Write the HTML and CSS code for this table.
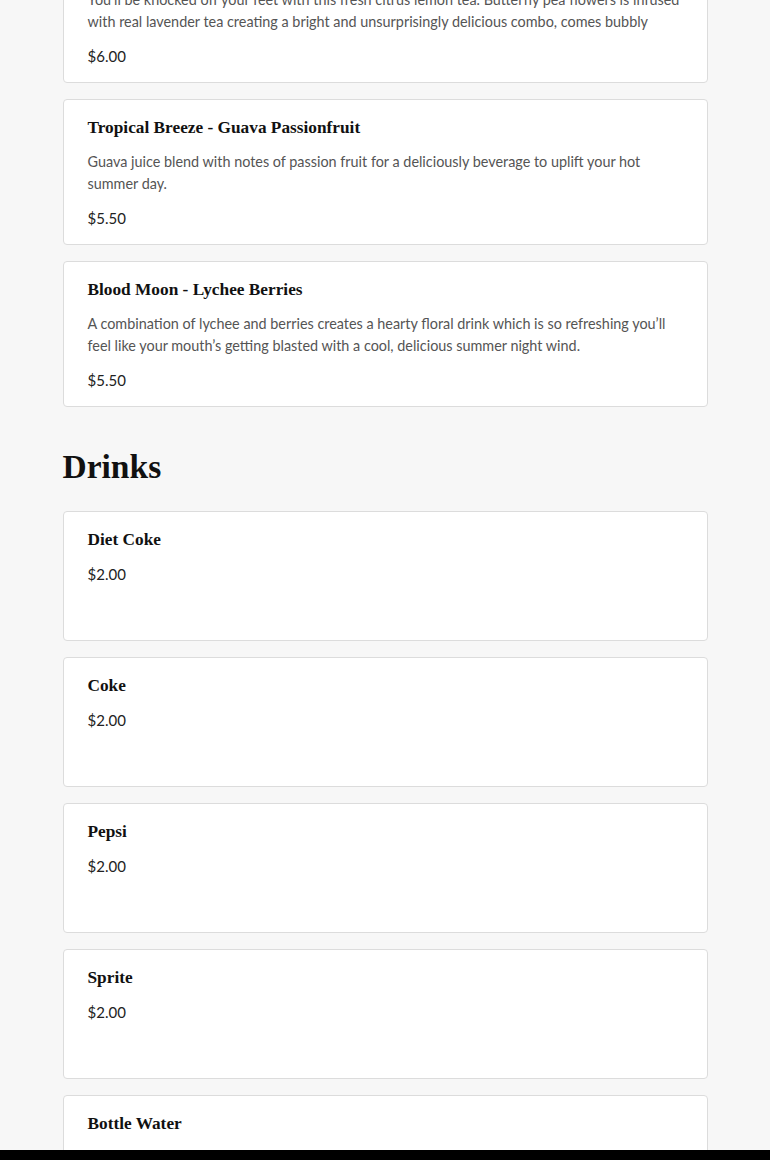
FILE: index.html
```html
<!DOCTYPE html>
<html lang="en">
<head>
<meta charset="utf-8">
<title>Menu</title>
<link rel="stylesheet" href="styles.css">
</head>
<body>
<main class="menu">
  <section class="category category-first">
    <div class="items">
      <article class="item">
        <h3 class="item-name">Butterfly Effect - Lavender Lemon</h3>
        <p class="item-desc">You'll be knocked off your feet with this fresh citrus lemon tea. Butterfly pea flowers is infused with real lavender tea creating a bright and unsurprisingly delicious combo, comes bubbly</p>
        <p class="item-price">$6.00</p>
      </article>
      <article class="item">
        <h3 class="item-name">Tropical Breeze - Guava Passionfruit</h3>
        <p class="item-desc">Guava juice blend with notes of passion fruit for a deliciously beverage to uplift your hot summer day.</p>
        <p class="item-price">$5.50</p>
      </article>
      <article class="item">
        <h3 class="item-name">Blood Moon - Lychee Berries</h3>
        <p class="item-desc">A combination of lychee and berries creates a hearty floral drink which is so refreshing you’ll feel like your mouth’s getting blasted with a cool, delicious summer night wind.</p>
        <p class="item-price">$5.50</p>
      </article>
    </div>
  </section>
  <section class="category">
    <h2 class="category-title">Drinks</h2>
    <div class="items">
      <article class="item item-short">
        <h3 class="item-name">Diet Coke</h3>
        <p class="item-price">$2.00</p>
      </article>
      <article class="item item-short">
        <h3 class="item-name">Coke</h3>
        <p class="item-price">$2.00</p>
      </article>
      <article class="item item-short">
        <h3 class="item-name">Pepsi</h3>
        <p class="item-price">$2.00</p>
      </article>
      <article class="item item-short">
        <h3 class="item-name">Sprite</h3>
        <p class="item-price">$2.00</p>
      </article>
      <article class="item item-short">
        <h3 class="item-name">Bottle Water</h3>
        <p class="item-price">$1.50</p>
      </article>
    </div>
  </section>
</main>
<div class="bottom-bar"></div>
</body>
</html>
```
FILE: styles.css
```css
* { box-sizing: border-box; }
html, body { margin: 0; padding: 0; }
body {
  background: #f7f7f7;
  font-family: Lato, "Liberation Sans", sans-serif;
  color: #222;
}
.menu {
  width: 645px;
  margin: 0 auto;
  padding-bottom: 40px;
  display: flex;
  flex-direction: column;
  gap: 40px;
}
.category-first { margin-top: -63px; }
.items {
  display: flex;
  flex-direction: column;
  gap: 16px;
}
.category-title {
  margin: 0 0 24px;
  font-family: "Liberation Serif", serif;
  font-weight: 700;
  font-size: 33.5px;
  line-height: 40px;
  color: #111;
}
.item {
  background: #fff;
  border: 1px solid #dcdcdc;
  border-radius: 4px;
  padding: 16px 24px 15px;
}
.item-short { min-height: 130px; }
.item-name {
  margin: 0 0 11px;
  font-family: "Liberation Serif", serif;
  font-weight: 700;
  font-size: 17.3px;
  line-height: 24px;
  color: #111;
}
.item-desc {
  margin: 0 0 12px;
  font-size: 14.4px;
  line-height: 22px;
  color: #555;
}
.item-price {
  margin: 0;
  font-size: 15px;
  line-height: 22px;
  color: #222;
}
.bottom-bar {
  position: fixed;
  left: 0;
  right: 0;
  bottom: 0;
  height: 10px;
  background: #000;
}
```
